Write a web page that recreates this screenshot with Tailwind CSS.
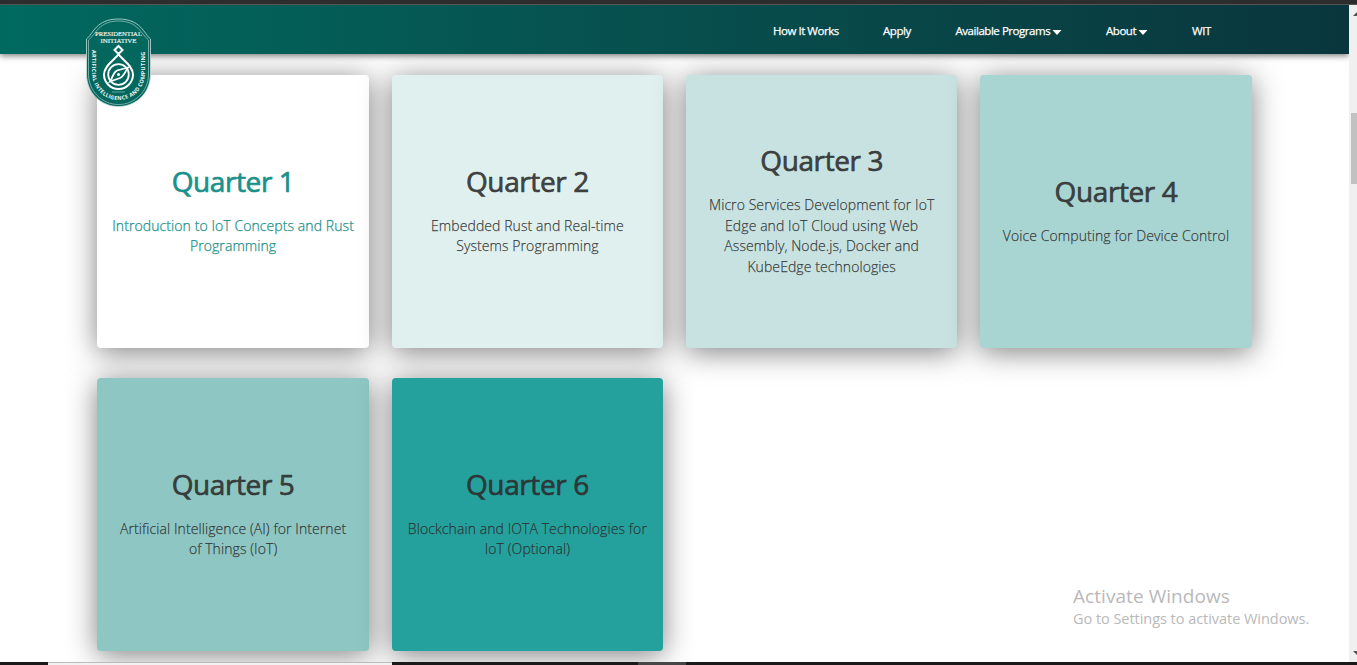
<!DOCTYPE html>
<html lang="en"><head><meta charset="utf-8"><title>Quarters</title>
<script src="https://cdn.jsdelivr.net/npm/@tailwindcss/browser@4"></script>
<style>
body{font-family:"Open Sans",sans-serif}
.card{box-shadow:0 4px 29px rgba(0,0,0,.5);border-radius:4px;height:273px;display:flex;flex-direction:column;align-items:center;justify-content:center;text-align:center;color:rgba(45,45,45,.88);padding:0 10px 1.6px}
.card h2{font-size:28px;line-height:33.6px;margin-bottom:17px;font-weight:400;letter-spacing:-.4px;-webkit-text-stroke:.7px currentColor}
.card p{font-size:14px;line-height:20.5px;font-weight:300;letter-spacing:.08px;-webkit-text-stroke:.25px currentColor}
</style></head>
<body class="w-[1357px] h-[665px] overflow-hidden bg-white flex flex-col">
<div class="h-[5px] shrink-0 bg-[#2d2d2d] border-b border-[#555]"></div>
<div class="flex h-[657px] shrink-0 overflow-hidden">
 <div class="w-[1349px] flex flex-col relative overflow-hidden">
  <header class="h-[49px] shrink-0 relative z-10 flex items-center bg-linear-to-r from-[#00695f] to-[#09363d] shadow-[0_2px_6px_rgba(0,0,0,.5)]">
   <svg class="absolute left-[85px] top-[12px]" width="67" height="91" viewBox="0 0 67 91" fill="none">
    <path d="M1.500 57V22C8 17 11 2 33.500 2S59 17 65.500 22V57C65.500 76 51 89.500 33.500 89.500S1.500 76 1.500 57Z" fill="#03675e" stroke="#c8dfdc" stroke-width=".8"/>
    <path d="M3.500 57V23C11 17 14 4 33.500 4S56 17 63.500 23V57C63.500 74 50 87.500 33.500 87.500S3.500 74 3.500 57Z" stroke="#8fbfba" stroke-width=".8"/>
    <g fill="#e4f0ee" text-anchor="middle" font-family="Liberation Serif" stroke="#e4f0ee" stroke-width=".2"><text x="33.500" y="18.800" font-size="6.500" textLength="47" lengthAdjust="spacingAndGlyphs">PRESIDENTIAL</text><text x="33.500" y="25.500" font-size="6.500" textLength="36" lengthAdjust="spacingAndGlyphs">INITIATIVE</text></g>
    <path id="arc" d="M7 33V55C7 71 18.500 83 33.500 83S60 71 60 55V31"/>
    <text fill="#f0f7f6" font-family="Open Sans" font-weight="700" font-size="5.400"><textPath href="#arc" textLength="128" lengthAdjust="spacing">ARTIFICIAL INTELLIGENCE AND COMPUTING</textPath></text>
    <path d="M33.500 29L37.500 33L33.500 37L29.500 33Z" stroke="#fff" stroke-width="2"/>
    <path d="M33.500 37C31 42 19 48 19 57.500A14.500 14.500 0 0 0 48 57.500C48 48 36 42 33.500 37Z" stroke="#fff" stroke-width="2"/>
    <circle cx="33.500" cy="57.500" r="10.300" stroke="#fff" stroke-width="1.800"/>
    <path d="M43 50.500L32 53.500C28 55.500 28 60 25 64.500L35 61C39 59 40 55 43 50.500Z" stroke="#fff" stroke-width="1.800"/><circle cx="33.500" cy="57.500" r="1.500" fill="#fff"/>
    <path d="M27 75H40" stroke="#a3cbc6" stroke-width=".6"/>
   </svg>
   <nav class="flex ml-[773px] mt-[2px] text-white text-[11.500px] leading-[18px] tracking-[-.46px] whitespace-nowrap [-webkit-text-stroke:.25px_white]">
    <span class="w-[110px]">How It Works</span><span class="w-[72.500px]">Apply</span>
    <span class="w-[150.500px] flex items-center"><span class="w-[96px]">Available Programs</span><svg class="mt-[4px]" width="10" height="5"><path d="M.5 0H9.500L5 5Z" fill="#fff"/></svg></span>
    <span class="w-[86px] flex items-center"><span class="w-[32px]">About</span><svg class="mt-[4px]" width="10" height="5"><path d="M.5 0H9.500L5 5Z" fill="#fff"/></svg></span>
    <span>WIT</span>
   </nav>
  </header>
  <main class="grid grid-cols-4 gap-x-[22.900px] gap-y-[30px] ml-[97.400px] mt-[21px] w-[1154.300px] shrink-0">
   <section class="card bg-white !text-[#1b918b]"><h2>Quarter 1</h2><p>Introduction to IoT Concepts and Rust<br>Programming</p></section>
   <section class="card bg-[#e0f0ee]"><h2>Quarter 2</h2><p>Embedded Rust and Real-time<br>Systems Programming</p></section>
   <section class="card bg-[#c7e2e0]"><h2>Quarter 3</h2><p>Micro Services Development for IoT<br>Edge and IoT Cloud using Web<br>Assembly, Node.js, Docker and<br>KubeEdge technologies</p></section>
   <section class="card bg-[#a8d4d2]"><h2>Quarter 4</h2><p>Voice Computing for Device Control</p></section>
   <section class="card bg-[#8dc6c3]"><h2>Quarter 5</h2><p>Artificial Intelligence (AI) for Internet<br>of Things (IoT)</p></section>
   <section class="card bg-[#24a19c]"><h2>Quarter 6</h2><p>Blockchain and IOTA Technologies for<br>IoT (Optional)</p></section>
  </main>
  <aside class="absolute left-[1073px] top-[577px] text-[#b9b9b9] whitespace-nowrap"><p class="text-[19px] leading-[28px] tracking-[.06px]">Activate Windows</p><p class="text-[14.500px] leading-[18px] tracking-[-.04px]">Go to Settings to activate Windows.</p></aside>
 </div>
 <div class="w-[8px] bg-[#f0f0f0] flex flex-col justify-between relative">
  <svg class="mt-[7px]" width="8" height="5"><path d="M4 4L8 0V4Z" fill="#505050"/></svg>
  <div class="absolute left-[2px] top-[108px] w-[6px] h-[71px] bg-[#c1c1c1]"></div>
  <svg class="mb-[6px]" width="8" height="5"><path d="M4 0H8V4Z" fill="#505050"/></svg>
 </div>
</div>
<footer class="h-[3px] shrink-0 bg-[#1c191a] flex"><div class="ml-[48px] w-[344px] bg-[#f2f2f2] border-t border-[#bbb]"></div><div class="ml-[246px] w-[48px] bg-[#484546]"></div></footer>
</body></html>
